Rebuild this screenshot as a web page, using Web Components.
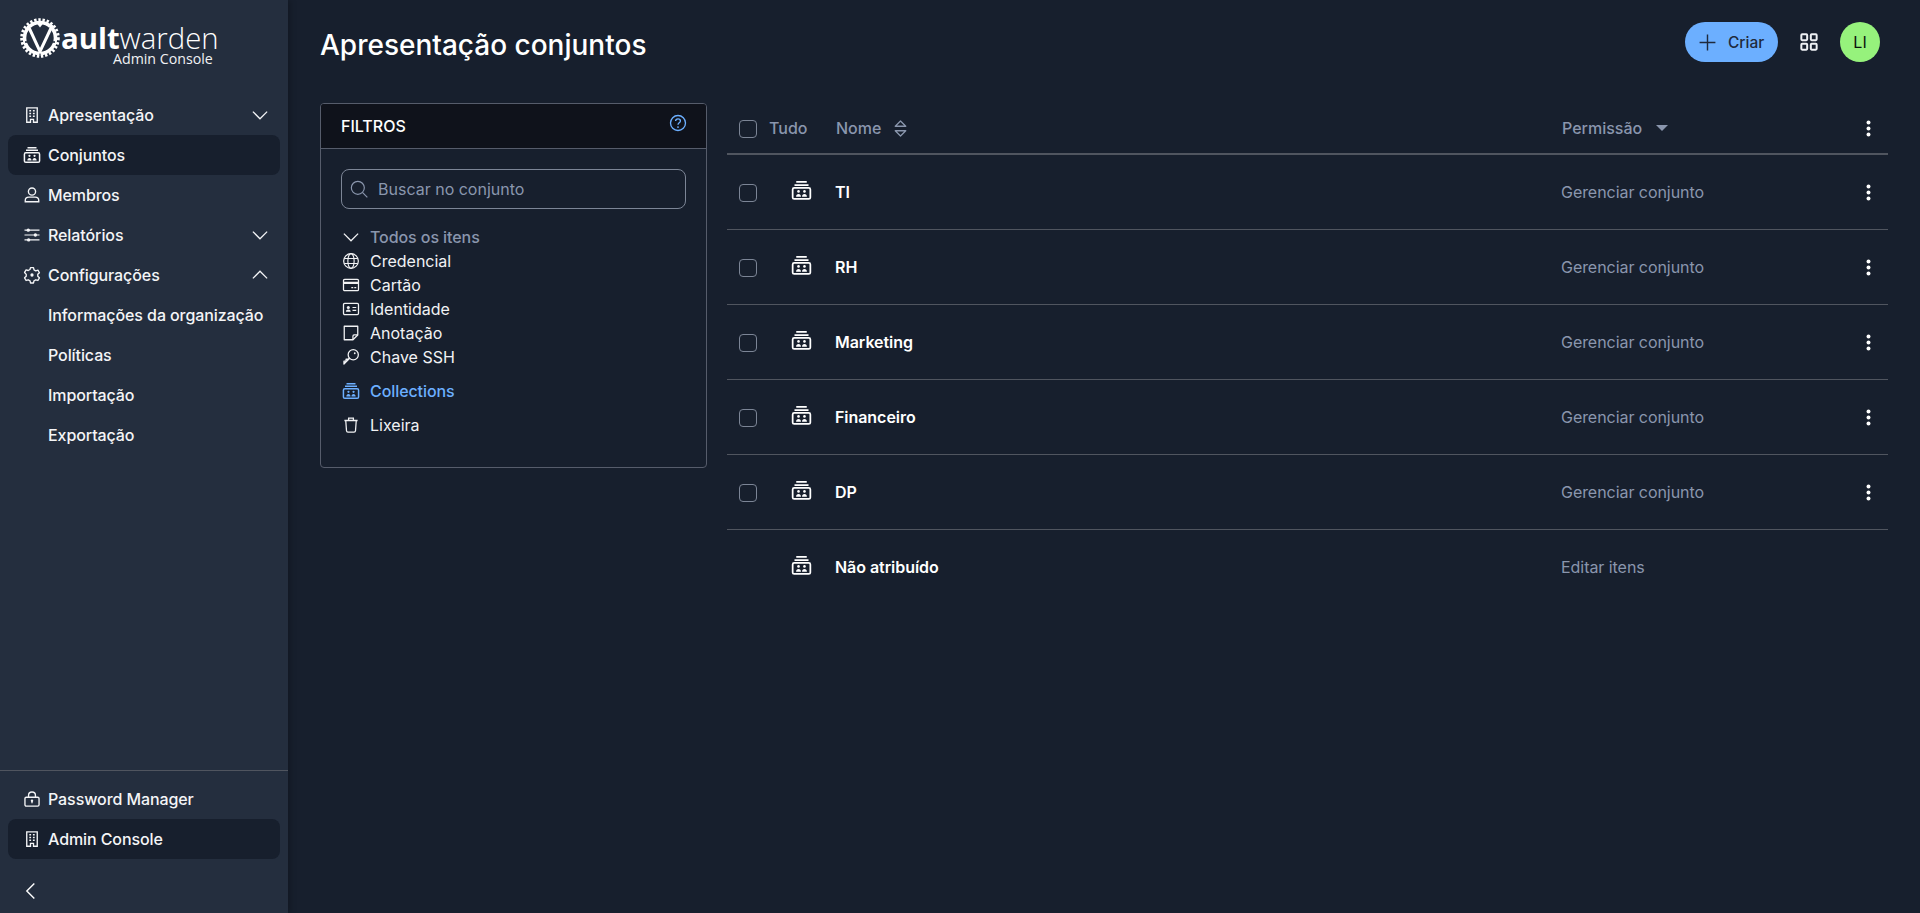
<!DOCTYPE html>
<html lang="pt-BR">
<head>
<meta charset="utf-8">
<title>Apresentação conjuntos</title>
<style>
    html, body { margin: 0; height: 100%; background: #171f2d; color: #fff; font-family: Inter, "Liberation Sans", sans-serif; overflow: hidden; }
</style>
</head>
<body>
<app-shell>
    <app-sidebar slot="sidebar">
        <side-item icon="building" chevron="down">Apresentação</side-item>
        <side-item icon="collection" active>Conjuntos</side-item>
        <side-item icon="user">Membros</side-item>
        <side-item icon="sliders" chevron="down">Relatórios</side-item>
        <side-item icon="cog" chevron="up">Configurações</side-item>
        <side-item>Informações da organização</side-item>
        <side-item>Políticas</side-item>
        <side-item>Importação</side-item>
        <side-item>Exportação</side-item>
        <side-item slot="footer" icon="lock">Password Manager</side-item>
        <side-item slot="footer" icon="building" active>Admin Console</side-item>
    </app-sidebar>
    <page-header slot="header">Apresentação conjuntos</page-header>
    <filter-panel slot="filters"></filter-panel>
    <collection-table slot="content">
        <collection-row name="TI" perm="Gerenciar conjunto"></collection-row>
        <collection-row name="RH" perm="Gerenciar conjunto"></collection-row>
        <collection-row name="Marketing" perm="Gerenciar conjunto"></collection-row>
        <collection-row name="Financeiro" perm="Gerenciar conjunto"></collection-row>
        <collection-row name="DP" perm="Gerenciar conjunto"></collection-row>
        <collection-row name="Não atribuído" perm="Editar itens" readonly last></collection-row>
    </collection-table>
</app-shell>

<script>
// icons, all on a 24 box, drawn with currentColor
const icons = {
    building: '<path d="M5 2.4h14v19.2h-5v-3.8h-4v3.8H5z" stroke-width="1.8"/><path d="M8.4 6.4h2.4M13.2 6.4h2.4M8.4 10h2.4M13.2 10h2.4M8.4 13.6h2.4M13.2 13.6h2.4" stroke-width="2"/>',
    collection: '<path d="M6 2.2h12M4 5.800h16" stroke-width="2"/><rect x="1.900" y="9.100" width="20.200" height="12.600" rx="1.800" stroke-width="2"/><circle cx="8.600" cy="13" r="1.500" fill="currentColor" stroke="none"/><circle cx="15.400" cy="13" r="1.500" fill="currentColor" stroke="none"/><path d="M5.800 19.200c0-2 1.200-3.200 2.800-3.200s2.800 1.200 2.800 3.200zM12.600 19.200c0-2 1.200-3.200 2.800-3.200s2.800 1.200 2.800 3.200z" fill="currentColor" stroke="none"/>',
    user: '<circle cx="12" cy="7.400" r="4.800" stroke-width="1.800"/><path d="M3 21v-1.600c0-2.800 2-4.600 4.800-4.600h8.400c2.800 0 4.800 1.800 4.800 4.600V21z" stroke-width="1.800"/>',
    sliders: '<path d="M2 5.500h20M2 12h20M2 18.500h20" stroke-width="1.600"/><circle cx="7" cy="5.500" r="2.200" fill="currentColor" stroke="none"/><circle cx="16.500" cy="12" r="2.200" fill="currentColor" stroke="none"/><circle cx="7.500" cy="18.500" r="2.200" fill="currentColor" stroke="none"/>',
    cog: '<path d="M10 2.200h4l.7 2.900 2.300 1.300 2.900-.9 2 3.500-2.200 2.100v2.600l2.200 2.100-2 3.500-2.900-.9-2.300 1.300-.7 2.900h-4l-.7-2.900L7 18.400l-2.900.9-2-3.500 2.200-2.100v-2.600L2.100 8.600l2-3.500 2.900.9 2.300-1.300z" stroke-width="1.800" stroke-linejoin="round"/><circle cx="12" cy="12" r="2.200" fill="currentColor" stroke="none"/>',
    lock: '<rect x="2.600" y="9.600" width="18.800" height="11.800" rx="1.800" stroke-width="1.800"/><path d="M7.400 9.600V7.200a4.600 4.600 0 0 1 9.200 0v2.400" stroke-width="1.800"/><circle cx="12" cy="14.400" r="1.600" fill="currentColor" stroke="none"/><path d="M12 14.500v3" stroke-width="1.700"/>',
    globe: '<circle cx="12" cy="12" r="9.800" stroke-width="1.600"/><ellipse cx="12" cy="12" rx="4.200" ry="9.800" stroke-width="1.500"/><path d="M3 8.600h18M3 15.400h18" stroke-width="1.500"/>',
    card: '<rect x="2" y="4.400" width="20" height="15.200" rx="1.600" stroke-width="1.700"/><path d="M2 9.200h20" stroke-width="2.800"/><path d="M12.400 15.600h2.600M16.400 15.600h2.600" stroke-width="1.600"/>',
    identity: '<rect x="2" y="4.600" width="20" height="14.800" rx="1.600" stroke-width="1.700"/><circle cx="8.400" cy="10" r="2" fill="currentColor" stroke="none"/><path d="M5.200 15.800c0-2.200 1.400-3.200 3.200-3.200s3.200 1 3.200 3.200z" fill="currentColor" stroke="none"/><path d="M14 10h5M14 13.800h5" stroke-width="1.600"/>',
    note: '<path d="M3 3h18v11.600L14.600 21H3z" stroke-width="1.700" stroke-linejoin="round"/><path d="M21 14.600h-4.800a1.600 1.600 0 0 0-1.600 1.600V21" stroke-width="1.700"/>',
    key: '<circle cx="15" cy="9" r="6.800" stroke-width="1.700"/><path d="M10.200 13.800 2.600 21.400v-3.800h2.800v-2.600h2.800L10 13.200" stroke-width="1.700" stroke-linejoin="round"/><circle cx="17" cy="7" r="1.200" fill="currentColor" stroke="none"/>',
    trash: '<path d="M3.200 6h17.600M8.800 6V2.800h6.400V6" stroke-width="1.700"/><path d="M5 6l1 13.600c.1 1.200 1 1.800 2 1.800h8c1 0 1.900-.6 2-1.800L19 6" stroke-width="1.700"/>',
    search: '<circle cx="10.600" cy="10.600" r="7.800" stroke-width="1.400"/><path d="M16.400 16.400 22 22" stroke-width="1.400"/>',
    help: '<circle cx="12" cy="12" r="10" stroke-width="1.800"/><path d="M8.800 9.400c0-1.900 1.400-3 3.200-3s3.200 1.100 3.200 2.800c0 2.600-3.200 2.400-3.200 5" stroke-width="1.800"/><circle cx="12" cy="17.400" r="1.200" fill="currentColor" stroke="none"/>',
    down: '<path d="M2.500 7.500 12 17l9.500-9.500" stroke-width="1.700"/>',
    up: '<path d="M2.500 16.500 12 7l9.500 9.500" stroke-width="1.700"/>',
    left: '<path d="M16 3 7 12l9 9" stroke-width="1.700"/>',
    plus: '<path d="M12 2v20M2 12h20" stroke-width="1.800"/>',
    grid: '<rect x="2.800" y="2.800" width="7" height="7" rx="1" stroke-width="2.400"/><rect x="14.200" y="2.800" width="7" height="7" rx="1" stroke-width="2.400"/><rect x="2.800" y="14.200" width="7" height="7" rx="1" stroke-width="2.400"/><rect x="14.200" y="14.200" width="7" height="7" rx="1" stroke-width="2.400"/>',
    sort: '<path d="M6 9.400 12 3.400l6 6z" stroke-width="1.500" stroke-linejoin="round"/><path d="M6 14.600l6 6 6-6z" stroke-width="1.500" stroke-linejoin="round"/>',
    kebab: '<circle cx="12" cy="4.400" r="2.500" fill="currentColor" stroke="none"/><circle cx="12" cy="12" r="2.500" fill="currentColor" stroke="none"/><circle cx="12" cy="19.600" r="2.500" fill="currentColor" stroke="none"/>'
}

function icon(name, size) {
    return `<svg width="${size}" height="${size}" viewBox="0 0 24 24" fill="none" stroke="currentColor" style="display:block;flex:none">${icons[name]}</svg>`
}

// base for the small elements that just set their shadow once
class Base extends HTMLElement {
    constructor() {
        super()
        this.attachShadow({ mode: 'open' })
    }
}

class AppShell extends Base {
    constructor() {
        super()
        this.shadowRoot.innerHTML = `
            <style>
                :host { display: flex; height: 100vh; }
                .main { flex: 1; min-width: 0; padding: 0 32px; box-sizing: border-box; }
                .body { display: grid; grid-template-columns: 387px 1fr; column-gap: 20px; }
            </style>
            <slot name="sidebar"></slot>
            <div class="main">
                <slot name="header"></slot>
                <div class="body">
                    <slot name="filters"></slot>
                    <slot name="content"></slot>
                </div>
            </div>`
    }
}

class AppSidebar extends Base {
    constructor() {
        super()
        this.shadowRoot.innerHTML = `
            <style>
                :host { display: flex; flex-direction: column; width: 288px; flex: none; height: 100vh; box-sizing: border-box; background: #242e3e; box-shadow: 2px 0 6px rgba(0,0,0,.25); position: relative; z-index: 1; }
                .logo { height: 95px; display: flex; padding-left: 20px; padding-top: 18px; box-sizing: border-box; }
                .mark { flex: none; }
                .word { margin-left: 1px; display: flex; flex-direction: column; font-family: "Open Sans", sans-serif; color: #fff; }
                .name { font-size: 29.300px; line-height: 30px; margin-top: 5px; font-weight: 300; white-space: nowrap; }
                .name b { font-weight: 700; }
                .sub { font-size: 14.200px; line-height: 12px; margin-left: 52px; color: #f1f2f4; white-space: nowrap; }
                nav { flex: 1; padding: 0 8px; }
                footer { border-top: 1px solid #50555f; padding: 8px 8px 0; }
                .collapse { height: 54px; box-sizing: border-box; display: flex; align-items: center; padding: 10px 0 0 13px; color: #fff; }
            </style>
            <div class="logo">
                <svg class="mark" width="40" height="40" viewBox="0 0 40 40">
                    <circle cx="20" cy="20" r="15.500" fill="none" stroke="#fff" stroke-width="3.600"/>
                    <circle cx="20" cy="20" r="18.300" fill="none" stroke="#fff" stroke-width="3" stroke-dasharray="2.400 1.800"/>
                    <g fill="#242e3e">
                        <circle cx="9.500" cy="10" r="1.100"/><circle cx="30.500" cy="10" r="1.100"/>
                        <circle cx="6" cy="24" r="1.100"/><circle cx="34" cy="24" r="1.100"/>
                        <circle cx="20" cy="36" r="1"/>
                    </g>
                    <path d="M8 7.500 20 33.500 32.500 7" fill="none" stroke="#fff" stroke-width="3"/>
                    <path d="M16.500 5 20 9.500 23.500 5z" fill="#fff"/>
                </svg>
                <div class="word">
                    <span class="name"><b>ault</b>warden</span>
                    <span class="sub">Admin Console</span>
                </div>
            </div>
            <nav><slot></slot></nav>
            <footer>
                <slot name="footer"></slot>
                <div class="collapse">${icon('left', 20)}</div>
            </footer>`
    }
}

class SideItem extends Base {
    connectedCallback() {
        const ic = this.getAttribute('icon')
        const chev = this.getAttribute('chevron')
        this.shadowRoot.innerHTML = `
            <style>
                :host { display: flex; align-items: center; height: 40px; border-radius: 8px; padding-left: 16px; padding-right: 11px; font-size: 16px; font-weight: 500; letter-spacing: -.09px; color: #f4f5f7; }
                :host([active]) { background: #171f2d; }
                .ic { width: 16px; height: 16px; margin-right: 8px; flex: none; display: flex; align-items: center; justify-content: center; }
                .lbl { flex: 1; white-space: nowrap; }
            </style>
            <span class="ic">${ic ? icon(ic, 18) : ''}</span>
            <span class="lbl"><slot></slot></span>
            ${chev ? icon(chev, 18) : ''}`
    }
}

class PageHeader extends Base {
    constructor() {
        super()
        this.shadowRoot.innerHTML = `
            <style>
                :host { display: flex; align-items: center; height: 88px; padding-bottom: 4px; box-sizing: border-box; margin-bottom: 15px; }
                h1 { flex: 1; margin: 5px 0 0; font-size: 28px; font-weight: 500; color: #fff; }
                .create { display: flex; align-items: center; gap: 11px; height: 40px; width: 93px; box-sizing: border-box; padding-left: 13px; border-radius: 20px; background: #6cafff; color: #1f2a3c; font-size: 15.500px; font-weight: 500; }
                .apps { margin: 0 21px 0 21px; color: #eef0f3; }
                .avatar { width: 40px; height: 40px; border-radius: 50%; margin-right: 8px; background: #96f27c; color: #0a140c; display: flex; align-items: center; justify-content: center; font-size: 16px; }
            </style>
            <h1><slot></slot></h1>
            <div class="create">${icon('plus', 19)}Criar</div>
            <div class="apps">${icon('grid', 20)}</div>
            <div class="avatar">LI</div>`
    }
}

class FilterPanel extends Base {
    constructor() {
        super()
        const row = (ic, txt) => `<div class="row">${icon(ic, 18)}<span>${txt}</span></div>`
        this.shadowRoot.innerHTML = `
            <style>
                :host { display: block; align-self: start; height: 365px; box-sizing: border-box; border: 1px solid #565c6b; border-radius: 4px; color: #f1f2f4; font-size: 16px; overflow: hidden; }
                header { height: 45px; box-sizing: border-box; border-bottom: 1px solid #565c6b; background: #0f121b; display: flex; align-items: center; justify-content: space-between; padding: 0 20px 0 20px; color: #fff; font-weight: 500; text-transform: uppercase; }
                header svg { color: #6cafff; margin-top: -6px; margin-right: -1px; }
                .box { padding: 20px 20px 0; }
                .search { height: 40px; box-sizing: border-box; border: 1px solid #7c8596; border-radius: 8px; display: flex; align-items: center; gap: 9px; padding-left: 7px; color: #8a96ad; }
                .list { margin-top: 16px; }
                .row { display: flex; align-items: center; height: 24px; gap: 10px; padding-left: 1px; white-space: nowrap; }
                .all { color: #8a96ad; font-weight: 500; letter-spacing: -.08px; }
                .all svg { color: #f1f2f4; }
                .blue { color: #6cafff; font-weight: 500; margin-top: 10px; letter-spacing: -.08px; }
                .trash { margin-top: 10px; }
            </style>
            <header>Filtros ${icon('help', 18)}</header>
            <div class="box">
                <div class="search">${icon('search', 20)}<span>Buscar no conjunto</span></div>
                <div class="list">
                    <div class="row all">${icon('down', 18)}<span>Todos os itens</span></div>
                    ${row('globe', 'Credencial')}
                    ${row('card', 'Cartão')}
                    ${row('identity', 'Identidade')}
                    ${row('note', 'Anotação')}
                    ${row('key', 'Chave SSH')}
                    <div class="row blue">${icon('collection', 18)}<span>Collections</span></div>
                    <div class="row trash">${icon('trash', 18)}<span>Lixeira</span></div>
                </div>
            </div>`
    }
}

class CollectionTable extends Base {
    constructor() {
        super()
        this.shadowRoot.innerHTML = `
            <style>
                :host { display: block; font-size: 16px; }
                .head { display: grid; grid-template-columns: 109px 1fr 327px; align-items: center; height: 52px; box-sizing: border-box; border-bottom: 2px solid #50555f; color: #8a96ad; font-weight: 500; }
                .c { display: flex; align-items: center; }
                .check { width: 18px; height: 18px; box-sizing: border-box; border: 1px solid #7c8596; border-radius: 4px; margin: 2px 12px 0; flex: none; }
                .sort { margin-left: 9px; }
                .perm { padding-left: 1px; }
                .caret { width: 0; height: 0; margin-left: 14px; border: 6px solid transparent; border-top: 6px solid #8a96ad; border-bottom: 0; }
                .more { margin-left: auto; margin-right: 10px; color: #fff; }
            </style>
            <div class="head">
                <div class="c"><span class="check"></span>Tudo</div>
                <div class="c">Nome<span class="sort">${icon('sort', 21)}</span></div>
                <div class="c perm">Permissão<span class="caret"></span><span class="more">${icon('kebab', 19)}</span></div>
            </div>
            <slot></slot>`
    }
}

class CollectionRow extends Base {
    connectedCallback() {
        const readonly = this.hasAttribute('readonly')
        this.shadowRoot.innerHTML = `
            <style>
                :host { display: grid; grid-template-columns: 60px 28px 1fr 327px; align-items: center; height: 75px; box-sizing: border-box; border-bottom: 1px solid #50555f; font-size: 16px; }
                :host([last]) { border-bottom-color: transparent; }
                .check { width: 18px; height: 18px; box-sizing: border-box; border: 1px solid #7c8596; border-radius: 4px; margin: 2px 0 0 12px; }
                .ic { color: #fff; display: flex; justify-content: center; margin-top: -3px; }
                .name { padding-left: 20px; font-weight: 600; color: #fff; letter-spacing: -.05px; }
                .perm { display: flex; align-items: center; color: #8a96ad; letter-spacing: -.05px; }
                .more { margin-left: auto; margin-right: 10px; color: #fff; }
            </style>
            <div>${readonly ? '' : '<div class="check"></div>'}</div>
            <div class="ic">${icon('collection', 21)}</div>
            <div class="name">${this.getAttribute('name')}</div>
            <div class="perm">${this.getAttribute('perm')}${readonly ? '' : `<span class="more">${icon('kebab', 19)}</span>`}</div>`
    }
}

customElements.define('app-shell', AppShell)
customElements.define('app-sidebar', AppSidebar)
customElements.define('side-item', SideItem)
customElements.define('page-header', PageHeader)
customElements.define('filter-panel', FilterPanel)
customElements.define('collection-table', CollectionTable)
customElements.define('collection-row', CollectionRow)
</script>
</body>
</html>
